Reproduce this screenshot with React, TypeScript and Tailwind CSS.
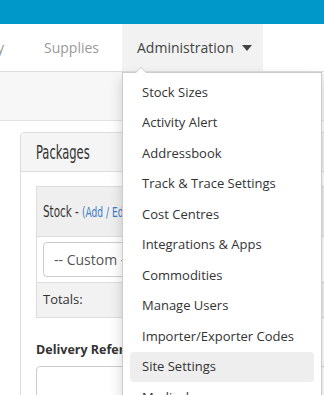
const menuItems = [
  "Stock Sizes",
  "Activity Alert",
  "Addressbook",
  "Track & Trace Settings",
  "Cost Centres",
  "Integrations & Apps",
  "Commodities",
  "Manage Users",
  "Importer/Exporter Codes",
  "Site Settings",
  "Medical",
];

const sans = "font-['Open_Sans',_'Liberation_Sans',_sans-serif]";
const narrow = "font-['Liberation_Sans_Narrow',_'DejaVu_Sans_Condensed',_sans-serif]";

const App = () => {
  return (
    <div className={`relative w-[324px] h-[395px] overflow-hidden bg-white ${sans}`}>
      {/* top brand bar */}
      <div className="h-6 bg-[#0097c9]" />

      {/* nav */}
      <div className="flex h-[48px] border-b border-[#dddddd] text-[14px] whitespace-nowrap">
        <div className="flex items-center -ml-[58px] w-[102px] text-[#999999]">Inventory</div>
        <div className="flex items-center w-[78px] text-[#999999]">Supplies</div>
        <div className="relative flex items-center w-[141px] bg-[#f2f2f2] pl-[15px] text-[#444444]">
          Administration
          <span className="ml-[8px] mt-[1px] border-x-[5px] border-x-transparent border-t-[6px] border-t-[#444444]" />
        </div>
      </div>

      {/* sub bar */}
      <div className="h-[49px] bg-[#f7f7f7] border-b border-[#e3e3e3]" />

      {/* page content */}
      <div className="pl-5 pt-[11px]">
        <div className="border border-[#dddddd] rounded-tl-[4px] w-[400px] h-[300px]">
          <div className="h-[39px] flex items-center pl-[15px] bg-[#f5f5f5] border-b border-[#dddddd] rounded-tl-[4px]">
            <span className={`inline-block origin-left scale-x-[0.64] text-[20px] text-[#333333] ${narrow}`}>
              Packages
            </span>
          </div>
          <div className="px-[15px] pt-[14px]">
            <div className="border border-[#dddddd]">
              <div className="h-[50px] flex items-center pl-[6px] bg-[#efefef] border-b border-[#dddddd] whitespace-nowrap">
                <span className={`inline-block origin-left scale-x-[0.72] ${narrow}`}>
                  <span className="text-[#333333] text-[16px]">Stock - </span>
                  <span className="text-[#3b7bc4] text-[14px]">(Add / Edit Stock Sizes)</span>
                </span>
              </div>
              <div className="h-[46px] border-b border-[#dddddd] px-[6px] flex items-center">
                <div className="h-[35px] w-[200px] border border-[#cccccc] rounded-[4px] flex items-center pl-[10px] text-[14px] text-[#555555]">
                  -- Custom --
                </div>
              </div>
              <div className="h-[34px] bg-[#f2f2f2] flex items-center pl-[6px] text-[13px] text-[#333333]">
                Totals:
              </div>
            </div>
            <div className="mt-[23px] text-[12.5px] font-bold text-[#333333] whitespace-nowrap">
              Delivery Reference
            </div>
            <div className="mt-[6px] h-[40px] w-[300px] border border-[#cccccc] rounded-[4px]" />
          </div>
        </div>
      </div>

      {/* dropdown menu */}
      <div className="absolute left-[122px] top-[72px] w-[200px] bg-white border border-[#cccccc] shadow-[0_6px_12px_rgba(0,0,0,0.175)] py-[4px]">
        <span className="absolute -top-[6px] left-[12px] border-x-[6px] border-x-transparent border-b-[6px] border-b-[#cccccc]" />
        <span className="absolute -top-[5px] left-[13px] border-x-[5px] border-x-transparent border-b-[5px] border-b-white" />
        {menuItems.map((item) => (
          <div
            key={item}
            className={`mx-[7px] h-[30.5px] flex items-center px-[12px] rounded-[4px] text-[13px] text-[#333333] whitespace-nowrap ${
              item === "Site Settings" ? "bg-[#eeeeee]" : ""
            }`}
          >
            {item}
          </div>
        ))}
      </div>
    </div>
  );
};

export default App;
